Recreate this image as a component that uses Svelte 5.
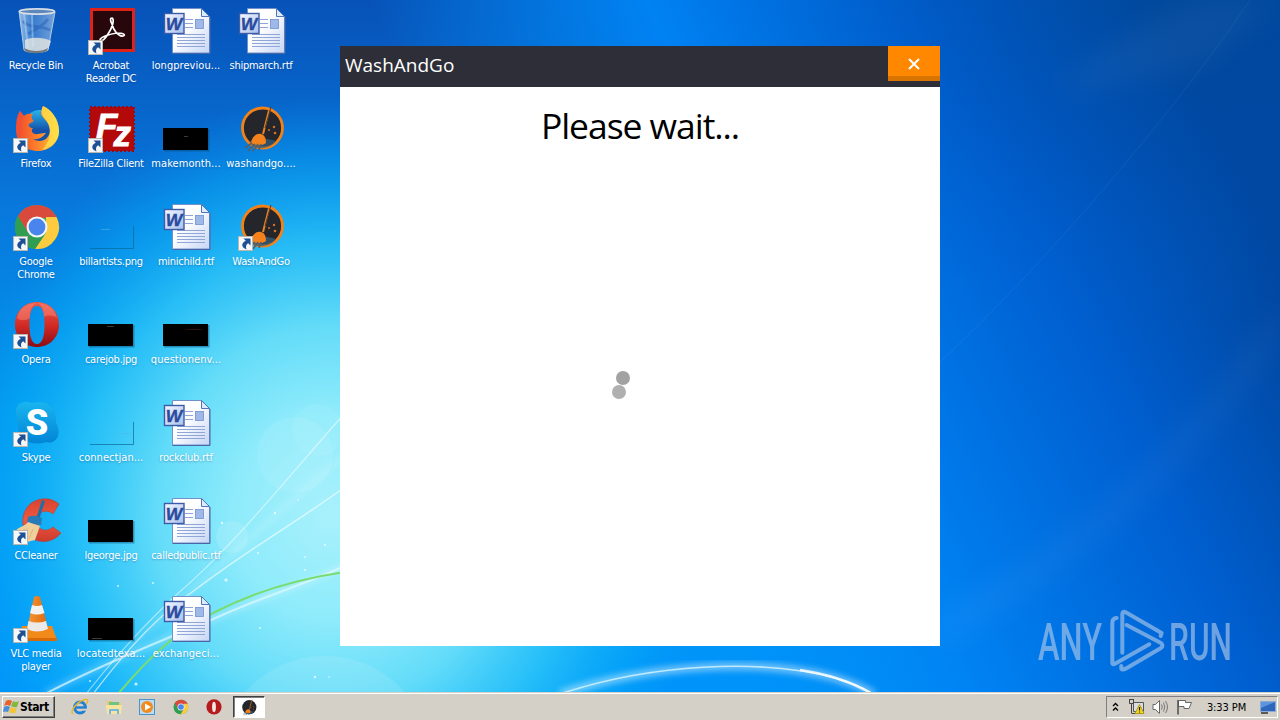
<script>
  const items = [
    { label: 'Recycle Bin', icon: 'bin' },
    { label: 'Firefox', icon: 'firefox', shortcut: true },
    { label: 'Google\nChrome', icon: 'chrome', shortcut: true },
    { label: 'Opera', icon: 'opera', shortcut: true },
    { label: 'Skype', icon: 'skype', shortcut: true },
    { label: 'CCleaner', icon: 'ccleaner', shortcut: true },
    { label: 'VLC media\nplayer', icon: 'vlc', shortcut: true },
    { label: 'Acrobat\nReader DC', icon: 'acrobat', shortcut: true },
    { label: 'FileZilla Client', icon: 'filezilla', shortcut: true },
    { label: 'billartists.png', icon: 'clear', mark: 'M13 26.5h9' },
    { label: 'carejob.jpg', icon: 'black', mark: 'M19 25.5h7' },
    { label: 'connectjan...', icon: 'clear', mark: 'M34 34.5h9' },
    { label: 'lgeorge.jpg', icon: 'black' },
    { label: 'locatedtexa...', icon: 'black', mark: 'M4 43.5h10' },
    { label: 'longpreviou...', icon: 'word' },
    { label: 'makemonth...', icon: 'black', mark: 'M21 31.5h4' },
    { label: 'minichild.rtf', icon: 'word' },
    { label: 'questionenv...', icon: 'black', mark: 'M23 28.5h16', markColor: '#4a1010' },
    { label: 'rockclub.rtf', icon: 'word' },
    { label: 'calledpublic.rtf', icon: 'word' },
    { label: 'exchangeci...', icon: 'word' },
    { label: 'shipmarch.rtf', icon: 'word' },
    { label: 'washandgo....', icon: 'wash' },
    { label: 'WashAndGo', icon: 'wash', shortcut: true }
  ];

  const sparkles = [
    [118, 586, 1], [153, 583, 1], [226, 580, 1.6], [275, 513, 1.2], [222, 523, 1.2], [305, 570, 1],
    [136, 684, 1.6], [90, 681, 1], [315, 677, 1.2], [260, 628, 1], [258, 553, 1], [305, 557, 0.9],
    [206, 640, 1], [180, 555, 0.9], [325, 545, 1], [298, 500, 0.8], [329, 677, 0.8]
  ];
</script>

{#snippet chrome()}
  <circle cx="24" cy="24" r="22" fill="#4aa85a" />
  <path d="M4.9 13A22 22 0 0 1 43.1 13L43.5 15H24L14.5 29Z" fill="#d94a3d" />
  <path d="M43.5 14A22 22 0 0 1 22 46L33 29V14Z" fill="#fccb3f" />
  <path d="M4.9 13 14.5 29.5 24 34 33 30 22 46A22 22 0 0 1 4.9 13Z" fill="#2f9e52" />
  <circle cx="24" cy="24" r="10.5" fill="#f2f5f5" />
  <circle cx="24" cy="24" r="8.4" fill="#4a85ee" />
{/snippet}

{#snippet opera()}
  <path
    fill="url(#operaRed)"
    fill-rule="evenodd"
    d="M24 1C36 1 46 10 46 23.5S36 46 24 46 2 37 2 23.5 12 1 24 1ZM24 5C18.5 5 16.5 12 16.5 23.5S18.5 43 24 43 31.5 35 31.5 23.5 29.5 5 24 5Z"
  />
  <path d="M4 17C6 7 14 2 24 2 19 3 17 9 16.8 17 13 20 7 20 4 17ZM24 2C34 2 42 7 44 17 40 14 34 14 31.2 16 30.5 9 29 3 24 2Z" fill="#ff9a8c" opacity="0.4" />
{/snippet}

{#snippet wash(small)}
  <circle cx="24.5" cy="23" r="20" fill="#25262c" stroke="#f28218" stroke-width={small ? 0 : 2.8} />
  <path d="M12 36C20 31 30 34 38 36 32 44 20 45 14 41Z" fill="#365f79" opacity="0.75" />
  <path d="M31 5.5 25 29" stroke="#e98522" stroke-width="2" fill="none" />
  <path d="M33 2 27 23" stroke="#53362a" stroke-width="1" fill="none" />
  <path d="M13 38C14 31 19 28 23 29S28 34 28 38C24 41 18 41 13 38Z" fill="#f5811c" />
  <path d="M14 38 7 43M17 39 10 46M20 39 15 46M23 39 21 45" stroke="#53606b" stroke-width="1.6" />
  <circle cx="36" cy="22" r="1.2" fill="#d87021" />
  <circle cx="31" cy="25" r="1" fill="#d87021" />
  <circle cx="37" cy="28" r="1.3" fill="#d87021" />
{/snippet}

{#snippet picture(item)}
  {#if item.icon === 'bin'}
    <path d="M6 4 11 43C12 46 33 46 35 43L42 5Z" fill="url(#glass)" stroke="#b2cbe3" stroke-width="1" />
    <path d="M12 33C18 30 30 30 38 34L35 43C31 46 15 46 12 42Z" fill="#dfe2df" opacity="0.85" />
    <path d="M10 14C16 22 24 17 37 23M15 27C23 22 30 19 35 12" fill="none" stroke="#1c55ac" stroke-width="3" opacity="0.4" />
    <path d="M11 6 15 41M19 7 20 40" stroke="#d4eaff" stroke-width="2" opacity="0.4" />
    <path d="M11 41C18 45 29 45 35 41L34 44C28 47 17 47 12 44Z" fill="#727a80" />
    <ellipse cx="24" cy="4.5" rx="17.5" ry="2.6" fill="#5d88bd" stroke="#d6dde4" stroke-width="1.8" />
  {:else if item.icon === 'firefox'}
    <circle cx="27" cy="22" r="17" fill="url(#foxBlue)" />
    <path
      fill="url(#foxFire)"
      d="M30 1C39 5 46 15 46 26 46 37 37 46 25 46 12 46 3 37 3 25 3 19 3 12 7 6L11 11C14 8 17 9 20 9 18 11 18 14 21 16L16 19C15 21 17 23 20 23 17 26 20 30 25 29 29 28 32 28 33 28 29 33 25 35 20 34 28 39 37 34 37 25 37 17 30 14 28 9 28 6 29 3 30 1Z"
    />
    <path d="M30 1C39 5 46 15 46 26 46 36 38 43 29 45 40 34 38 20 32 14 28 10 28 5 30 1Z" fill="#ffe34c" opacity="0.75" />
    <path d="M7 6C3 14 3 26 5 33 10 26 5 18 11 11Z" fill="#f05035" />
  {:else if item.icon === 'chrome'}
    {@render chrome()}
  {:else if item.icon === 'opera'}
    {@render opera()}
  {:else if item.icon === 'skype'}
    <path
      fill="url(#skypeBlue)"
      d="M3 16C1 6 10 0 19 4 33 0 44 9 43 24 50 36 42 46 33 43 18 48 4 40 5 26Z"
    />
    <text x="24" y="36" text-anchor="middle" font-family="Roboto, sans-serif" font-size="36" font-weight="900" fill="#fff">S</text>
  {:else if item.icon === 'ccleaner'}
    <path
      fill="url(#cRed)"
      stroke="#b93627"
      stroke-width="0.5"
      d="M46 7 40 17C33 11 24 15 24 24S33 36 40 30L48 36C40 46 26 47 17 40 6 31 8 12 20 5 29 0 39 1 46 7Z"
    />
    <path d="M30 5 24 24" stroke="#236ea7" stroke-width="3.2" stroke-linecap="round" />
    <path d="M15 20Q22 17 29 21L28 28 14 26Z" fill="#267bb8" />
    <path d="M15 25C12 30 5 29 1 36L14 45 22 43 27 29Z" fill="#efd09d" />
    <path d="M15 31 9 39M20 32 16 42M12 32 5 37" stroke="#dfb67a" stroke-width="1" />
  {:else if item.icon === 'vlc'}
    <path d="M9 31H39L44 45H6Z" fill="#f28a19" />
    <path d="M6 43H44V46H5Z" fill="#d96a09" />
    <path d="M21 2Q24 0 27 2L35 34Q25 40 14 34Z" fill="url(#cone)" />
    <path d="M19 10Q24 12 29 10L31.5 18Q24 21 17 18Z" fill="#f4f2ef" />
    <path d="M15.5 26Q24 29 33 26L35 34Q24 39 14 34Z" fill="#eceae8" />
  {:else if item.icon === 'acrobat'}
    <rect x="3.5" y="2.5" width="42" height="41" fill="#27060c" stroke="#df2318" stroke-width="3" />
    <path
      fill="none"
      stroke="#fff"
      stroke-width="1.7"
      stroke-linejoin="round"
      d="M24 17C22 13 22 11 24 11 27 13 24 21 20 27 17 32 14 35 12 33 12 30 22 27 29 26 36 26 38 28 35 29 30 30 25 22 24 17Z"
    />
  {:else if item.icon === 'filezilla'}
    <rect x="2" y="2" width="44" height="44" fill="#b3090b" stroke="#9b0c12" stroke-width="2" stroke-dasharray="2 2" />
    <text x="8" y="33" font-family="Liberation Sans, sans-serif" font-size="35" font-weight="bold" font-style="italic" fill="#fff" stroke="#fff" stroke-width="0.8">F<tspan dx="-4" dy="8">z</tspan></text>
  {:else if item.icon === 'clear'}
    <path d="M2 45.5H45.5V23" fill="none" stroke="#0a6a99" stroke-width="1" opacity="0.7" />
    <path d={item.mark} stroke="#4fb4e8" stroke-width="1" opacity="0.6" />
  {:else if item.icon === 'black'}
    <rect x="1" y="24" width="45.5" height="22.5" fill="#064a70" opacity="0.45" />
    <rect x="0" y="23" width="45" height="22" fill="#000" />
    {#if item.mark}
      <path d={item.mark} stroke={item.markColor ?? '#555'} stroke-width="0.7" />
    {/if}
  {:else if item.icon === 'word'}
    <path d="M9.5 1.5H38.5L46.5 9.5V46H9.5Z" fill="url(#paper)" stroke="#7191cd" stroke-width="1" />
    <path d="M47 10V46.5H9.5" fill="none" stroke="#4a67a5" stroke-width="1" />
    <path d="M38.5 1.5V9.5H46.5Z" fill="#dcebfb" stroke="#5374b5" stroke-width="1" />
    <path d="M22 12.5H30M22 16.5H30M22 20.5H30M14 27.5H42M14 30.5H42M14 33.5H42M14 36.5H42M14 39.5H42" stroke="#8fa6d6" stroke-width="1" />
    <rect x="32.5" y="12.5" width="8" height="9" fill="#9eb9e8" stroke="#7291ce" stroke-width="0.8" />
    <rect x="1.5" y="6.5" width="19.5" height="20" fill="url(#wordBox)" stroke="#3c5ba8" stroke-width="1.4" />
    <text x="11" y="22.5" text-anchor="middle" font-family="Liberation Sans, sans-serif" font-size="17" font-weight="bold" font-style="italic" fill="#2a4a9e" stroke="#2a4a9e" stroke-width="0.4" textLength="16.5" lengthAdjust="spacingAndGlyphs">W</text>
  {:else if item.icon === 'wash'}
    {@render wash(false)}
  {/if}
  {#if item.shortcut}
    <rect x="0.5" y="33.5" width="14" height="14" fill="#f5f7f8" stroke="#b9b6ae" />
    <path d="M5.5 35.5H12.5V42.5L10.2 40.2C8 41.5 7.5 43.5 8.5 46.5 3.5 44.5 2.5 40.5 7.8 37.8Z" fill="#1c4f93" />
  {/if}
{/snippet}

<div class="screen">
  <svg class="wallpaper" width="1280" height="692" viewBox="0 0 1280 692" aria-hidden="true">
    <defs>
      <linearGradient id="base" x1="0" y1="0" x2="0" y2="1">
        <stop offset="0" stop-color="#0752b8" />
        <stop offset="0.3" stop-color="#0878dc" />
        <stop offset="0.6" stop-color="#0198ef" />
        <stop offset="1" stop-color="#0094fb" />
      </linearGradient>
      <radialGradient id="glow" gradientUnits="userSpaceOnUse" cx="0" cy="0" r="1" gradientTransform="translate(330 515) scale(385 420)">
        <stop offset="0" stop-color="#a8f1fc" />
        <stop offset="0.25" stop-color="#8eebfb" />
        <stop offset="0.45" stop-color="#66def9" stop-opacity="0.97" />
        <stop offset="0.65" stop-color="#2cc6f9" stop-opacity="0.85" />
        <stop offset="0.85" stop-color="#08aef8" stop-opacity="0.45" />
        <stop offset="1" stop-color="#0698ee" stop-opacity="0" />
      </radialGradient>
      <linearGradient id="rightSide" gradientUnits="userSpaceOnUse" x1="640" y1="560" x2="1280" y2="250">
        <stop offset="0" stop-color="#0092f6" stop-opacity="0" />
        <stop offset="0.35" stop-color="#0082f3" />
        <stop offset="0.7" stop-color="#005fd0" />
        <stop offset="1" stop-color="#00459c" />
      </linearGradient>
      <radialGradient id="topShade" gradientUnits="userSpaceOnUse" cx="0" cy="0" r="1" gradientTransform="translate(1180 0) scale(520 320)">
        <stop offset="0" stop-color="#004a9a" stop-opacity="0.5" />
        <stop offset="0.5" stop-color="#0050b0" stop-opacity="0.3" />
        <stop offset="1" stop-color="#0060d0" stop-opacity="0" />
      </radialGradient>
      <linearGradient id="operaRed" x1="0" y1="0" x2="0" y2="1">
        <stop offset="0" stop-color="#ed5b4c" />
        <stop offset="0.55" stop-color="#cf2823" />
        <stop offset="1" stop-color="#8b0b12" />
      </linearGradient>
      <linearGradient id="glass" x1="0" y1="0" x2="1" y2="0">
        <stop offset="0" stop-color="#b8d6f3" stop-opacity="0.8" />
        <stop offset="0.4" stop-color="#5b95da" stop-opacity="0.6" />
        <stop offset="1" stop-color="#a4c4e6" stop-opacity="0.7" />
      </linearGradient>
      <linearGradient id="foxBlue" x1="0" y1="0" x2="0" y2="1">
        <stop offset="0" stop-color="#27b4ea" />
        <stop offset="0.6" stop-color="#1551aa" />
      </linearGradient>
      <linearGradient id="foxFire" x1="0" y1="0" x2="1" y2="0">
        <stop offset="0" stop-color="#f0472e" />
        <stop offset="0.5" stop-color="#fc822a" />
        <stop offset="1" stop-color="#ffd33d" />
      </linearGradient>
      <linearGradient id="skypeBlue" x1="0" y1="0" x2="0" y2="1">
        <stop offset="0" stop-color="#19b5ef" />
        <stop offset="1" stop-color="#0284d6" />
      </linearGradient>
      <linearGradient id="cRed" x1="0" y1="0" x2="0" y2="1">
        <stop offset="0" stop-color="#d84430" />
        <stop offset="0.5" stop-color="#f05840" />
        <stop offset="1" stop-color="#cc3a2c" />
      </linearGradient>
      <linearGradient id="cone" x1="0" y1="0" x2="1" y2="0">
        <stop offset="0" stop-color="#f39a38" />
        <stop offset="1" stop-color="#e26607" />
      </linearGradient>
      <linearGradient id="paper" x1="0" y1="0" x2="1" y2="1">
        <stop offset="0.4" stop-color="#fff" />
        <stop offset="1" stop-color="#c5d5f5" />
      </linearGradient>
      <linearGradient id="wordBox" x1="0" y1="0" x2="1" y2="1">
        <stop offset="0" stop-color="#f5f9ff" />
        <stop offset="1" stop-color="#a9c1ec" />
      </linearGradient>
      <filter id="soft" x="-20%" y="-20%" width="140%" height="140%">
        <feGaussianBlur stdDeviation="3" />
      </filter>
      <filter id="haze" x="-50%" y="-50%" width="200%" height="200%">
        <feGaussianBlur stdDeviation="14" />
      </filter>
    </defs>

    <rect width="1280" height="692" fill="url(#base)" />
    <rect width="1280" height="692" fill="url(#rightSide)" />
    <rect width="1280" height="692" fill="url(#topShade)" />
    <rect width="1280" height="692" fill="url(#glow)" />

    <g fill="#fff">
      <circle cx="295" cy="455" r="38" opacity="0.08" />
      <circle cx="318" cy="430" r="26" opacity="0.06" />
      <circle cx="232" cy="537" r="16" opacity="0.12" />
      <circle cx="325" cy="762" r="106" opacity="0.1" />
      <path d="M940 610C1080 540 1210 420 1280 300V340C1200 460 1080 570 940 650Z" opacity="0.04" filter="url(#haze)" />
      <path d="M1050 95C1110 40 1150 20 1190 0H1280L1200 70Z" opacity="0.04" filter="url(#haze)" />
    </g>
    <g fill="none" stroke="#fff">
      <path d="M940 362C1060 250 1190 90 1250 0" stroke-width="1" opacity="0.06" />
      <path d="M45 694C110 660 170 638 220 616S290 590 345 566" stroke-width="6" opacity="0.25" filter="url(#soft)" />
      <path d="M45 694C110 660 170 638 220 616S290 590 345 566" stroke="#dffaff" stroke-width="2" opacity="0.7" />
      <path d="M86 694C125 645 150 620 175 596 235 545 285 480 345 413" stroke-width="1.2" opacity="0.5" />
      <path d="M93 694C130 645 165 610 195 590 250 548 300 520 345 487" stroke-width="1.4" opacity="0.6" />
      <path d="M130 648C190 590 270 520 345 455" stroke-width="5" opacity="0.16" filter="url(#soft)" />
      <path d="M118 694C155 650 180 630 215 612S290 580 345 572" stroke="#79dc70" stroke-width="2" />
      <path d="M560 694C650 664 760 658 835 678 855 684 866 689 874 695" stroke-width="8" opacity="0.45" filter="url(#soft)" />
      <path d="M560 694C650 664 760 658 835 678 855 684 866 689 874 695" stroke="#c9efff" stroke-width="1.6" opacity="0.9" />
      <path d="M800 670C835 675 856 684 874 695" stroke-width="2.4" opacity="0.8" />
    </g>
    {#each sparkles as [x, y, r]}
      <circle cx={x} cy={y} {r} fill="#fff" opacity="0.75" />
    {/each}
  </svg>

  <main class="desktop">
    <div class="icons">
      {#each items as item}
        <div class="item">
          <svg class="picture" width="48" height="48" viewBox="0 0 48 48" aria-hidden="true">
            {@render picture(item)}
          </svg>
          <span class="label" class:truncated={item.label.endsWith('...')}>{item.label}</span>
        </div>
      {/each}
    </div>

    <section class="window">
      <header class="titlebar">
        <h1>WashAndGo</h1>
        <button class="close" aria-label="Close">
          <svg width="12" height="12" viewBox="0 0 12 12">
            <path d="M1 1 11 11M11 1 1 11" stroke="#fff" stroke-width="2" />
          </svg>
        </button>
      </header>
      <p class="message">Please wait...</p>
      <svg class="spinner" width="60" height="60" viewBox="0 0 60 60" aria-hidden="true">
        <circle cx="13" cy="17" r="7" fill="#a2a2a2" />
        <circle cx="9" cy="31" r="7" fill="#b0b0b0" />
      </svg>
    </section>

    <svg class="watermark" width="204" height="76" viewBox="1033 600 204 76">
      <g fill="#a9c6ea" font-family="Roboto, sans-serif" font-size="51.5" font-weight="500" opacity="0.65">
        <text x="1038" y="659.5" textLength="64" lengthAdjust="spacingAndGlyphs">ANY</text>
        <text x="1169" y="659.5" textLength="63" lengthAdjust="spacingAndGlyphs">RUN</text>
      </g>
      <g transform="translate(880 590) scale(0.3333)" fill="none" stroke="#a9c6ea" stroke-width="12" stroke-linecap="round" stroke-linejoin="round" opacity="0.65">
        <path d="M710 84Q697 85 697 98V218Q697 225 705 221L808 163" />
        <path d="M727 188V72Q727 62 737 67L845 129L842 138" />
        <path d="M724 228V236Q727 241 737 236L843 174Q852 167 843 159L740 105" />
      </g>
    </svg>
  </main>

  <footer class="taskbar">
    <button class="start">
      <svg width="17" height="16" viewBox="0 0 17 16" aria-hidden="true">
        <path d="M3 2Q6 0 9 2L7 7Q4 5 1 7Z" fill="#e8602c" />
        <path d="M10 2Q13 4 16 2L14 8Q11 9 8 7Z" fill="#82b840" />
        <path d="M1 8Q4 6 7 8L5 13Q3 12 0 13Z" fill="#4a90d8" />
        <path d="M8 8Q11 10 14 9L12 14Q9 15 6 13Z" fill="#f6c433" />
      </svg>
      Start
    </button>

    <nav class="launch">
      <svg width="18" height="18" viewBox="0 0 18 18" aria-hidden="true">
        <circle cx="9" cy="9.5" r="5.4" fill="none" stroke="#1f7fd4" stroke-width="3" />
        <path d="M5 9.5H14" stroke="#1f7fd4" stroke-width="2.4" />
        <path d="M12 10.7H17V12.7H12Z" fill="#d4d0c8" />
        <path d="M2 16C-2 13 7 3 14 1.5 18 1 17 4 15 6" fill="none" stroke="#e8b72c" stroke-width="1.5" />
      </svg>
      <svg width="18" height="18" viewBox="0 0 18 18" aria-hidden="true">
        <path d="M2 3H7L8 5H16V15H2Z" fill="#e8c766" />
        <path d="M4 4H14V8H4Z" fill="#6fc387" />
        <path d="M1 7H17L16 16H2Z" fill="#f8e49c" />
        <path d="M4 16V12Q4 11 5 11H13Q14 11 14 12V16H12V13H6V16Z" fill="#76b8e2" />
      </svg>
      <svg width="18" height="18" viewBox="0 0 18 18" aria-hidden="true">
        <rect x="1.5" y="1.5" width="15" height="15" fill="#b9dcf4" stroke="#4a93cd" />
        <circle cx="9" cy="9" r="6" fill="#f38a1c" />
        <path d="M7 5.5 13 9 7 12.5Z" fill="#fff" />
      </svg>
      <svg width="18" height="18" viewBox="-3 -3 54 54" aria-hidden="true">{@render chrome()}</svg>
      <svg width="18" height="18" viewBox="-2 -2 52 52" aria-hidden="true">
        <circle cx="24" cy="23.5" r="22" fill="#b51a1c" />
        <ellipse cx="24" cy="24" rx="5.5" ry="15" fill="#f4e8e4" />
      </svg>
    </nav>

    <div class="task">
      <svg width="17" height="17" viewBox="2 0 46 48" aria-hidden="true">{@render wash(true)}</svg>
    </div>

    <div class="tray">
      <svg width="7" height="10" viewBox="0 0 7 10" aria-hidden="true">
        <path d="M1 4 3.5 1.5 6 4M1 8.5 3.5 6 6 8.5" fill="none" stroke="#000" stroke-width="1.3" />
      </svg>
      <svg class="net" width="17" height="16" viewBox="0 0 17 16" aria-hidden="true">
        <path d="M5.5 3.5H15.5V12.5H5.5Z" fill="#d9dde0" stroke="#555" />
        <path d="M1.5 1V4.5H5.5V1M3.5 4.5V14M1 0.5H6M3.5 14.5H9" fill="none" stroke="#444" />
        <path d="M11.5 5.5 16 14.5H7Z" fill="#f4d927" stroke="#b09a13" />
        <path d="M11.5 8V11.5M11.5 12.5V13.5" stroke="#222" stroke-width="1.2" />
      </svg>
      <svg class="sound" width="17" height="16" viewBox="0 0 17 16" aria-hidden="true">
        <path d="M1 5.5H3.5L7.5 1.5V14.5L3.5 10.5H1Z" fill="#fff" stroke="#666" />
        <path d="M9.5 5.5Q11 8 9.5 10.5M11.5 3.5Q14 8 11.5 12.5M13.5 2Q17.5 8 13.5 14" fill="none" stroke="#777" />
      </svg>
      <svg class="flag" width="17" height="16" viewBox="0 0 17 16" aria-hidden="true">
        <path d="M2.5 1.5H9.5V3.5H15.5L13 9.5H8V7.5H2.5Z" fill="#fff" stroke="#666" />
        <path d="M2 1V15.5" stroke="#555" stroke-width="1.6" />
      </svg>
      <time>3:33 PM</time>
      <svg width="16" height="14" viewBox="0 0 16 14" aria-hidden="true">
        <rect x="0.5" y="1.5" width="15" height="10" fill="#2d66bd" stroke="#8fa9cf" />
        <path d="M1 2H15L1 8Z" fill="#5c94df" />
        <path d="M1 13H8" stroke="#333" stroke-width="1.5" />
      </svg>
    </div>
  </footer>
</div>

<style>
  :global(body) {
    margin: 0;
    overflow: hidden;
  }

  .screen {
    position: relative;
    display: flex;
    flex-direction: column;
    width: 1280px;
    height: 720px;
    overflow: hidden;
    font-family: "DejaVu Sans Condensed", "DejaVu Sans", sans-serif;
    font-size: 11px;
    background: #0878dc;
  }

  .wallpaper {
    position: absolute;
    inset: 0 auto auto 0;
  }

  .desktop {
    position: relative;
    flex: 1;
  }

  .icons {
    display: grid;
    grid-auto-flow: column;
    grid-template-rows: repeat(7, 98px);
    grid-auto-columns: 75px;
    width: max-content;
  }

  .item {
    display: flex;
    flex-direction: column;
    align-items: center;
    gap: 4px;
    padding-top: 7px;
  }

  .picture {
    flex: none;
    margin-right: 1px;
  }

  .label {
    margin-right: 3px;
    color: #fff;
    font-size: 11px;
    line-height: 13px;
    letter-spacing: -0.25px;
    text-align: center;
    text-shadow: 0 1px 2px rgba(0, 50, 110, 0.35);
    white-space: pre;
  }

  .truncated {
    letter-spacing: 0.05px;
  }

  .window {
    position: absolute;
    top: 46px;
    left: 340px;
    display: flex;
    flex-direction: column;
    align-items: center;
    width: 600px;
    height: 600px;
    background: #fff;
    font-family: "Open Sans", "Noto Sans", sans-serif;
  }

  .titlebar {
    display: flex;
    justify-content: space-between;
    align-self: stretch;
    height: 41px;
    background: #2d2e38;
  }

  h1 {
    margin: 0;
    padding-left: 5px;
    color: #fff;
    font-size: 19px;
    font-weight: 400;
    line-height: 38px;
  }

  .close {
    display: flex;
    align-items: center;
    justify-content: center;
    box-sizing: border-box;
    width: 52px;
    height: 35px;
    padding: 5px 0 0;
    border: 0;
    border-bottom: 5px solid #d97400;
    background: #ff8800;
  }

  .message {
    margin: 13px 0 0;
    color: #000;
    font-size: 35.5px;
    line-height: 50px;
    letter-spacing: -1.05px;
    white-space: nowrap;
  }

  .spinner {
    margin-top: 211px;
  }

  .watermark {
    position: absolute;
    top: 600px;
    left: 1033px;
    overflow: visible;
  }

  .taskbar {
    position: relative;
    display: flex;
    align-items: center;
    box-sizing: border-box;
    height: 28px;
    padding: 2px 2px 0;
    background: #d4d0c8;
    box-shadow: inset 0 1px #d4d0c8, inset 0 2px #fff;
  }

  .start {
    display: flex;
    align-items: center;
    box-sizing: border-box;
    width: 53px;
    height: 22px;
    padding: 0;
    border: 1px solid;
    border-color: #fff #404040 #404040 #fff;
    box-shadow: inset -1px -1px #808080;
    background: #d4d0c8;
    color: #000;
    font: bold 12px "DejaVu Sans Condensed", sans-serif;
    letter-spacing: -0.4px;
  }

  .launch {
    display: flex;
    gap: 15.5px;
    margin-left: 16px;
  }

  .task {
    display: flex;
    align-items: center;
    justify-content: center;
    box-sizing: border-box;
    width: 32px;
    height: 22px;
    margin-left: 10px;
    border: 1px solid;
    border-color: #404040 #fff #fff #404040;
    box-shadow: inset 1px 1px #808080;
    background: #fff;
  }

  .tray {
    display: flex;
    align-items: center;
    box-sizing: border-box;
    width: 172px;
    height: 22px;
    margin-left: auto;
    padding: 0 1px 0 5px;
    border: 1px solid;
    border-color: #808080 #fff #fff #808080;
  }

  .net {
    margin-left: 9px;
  }

  .sound,
  .flag {
    margin-left: 7px;
  }

  time {
    margin: 0 auto;
    letter-spacing: -0.1px;
  }
</style>
